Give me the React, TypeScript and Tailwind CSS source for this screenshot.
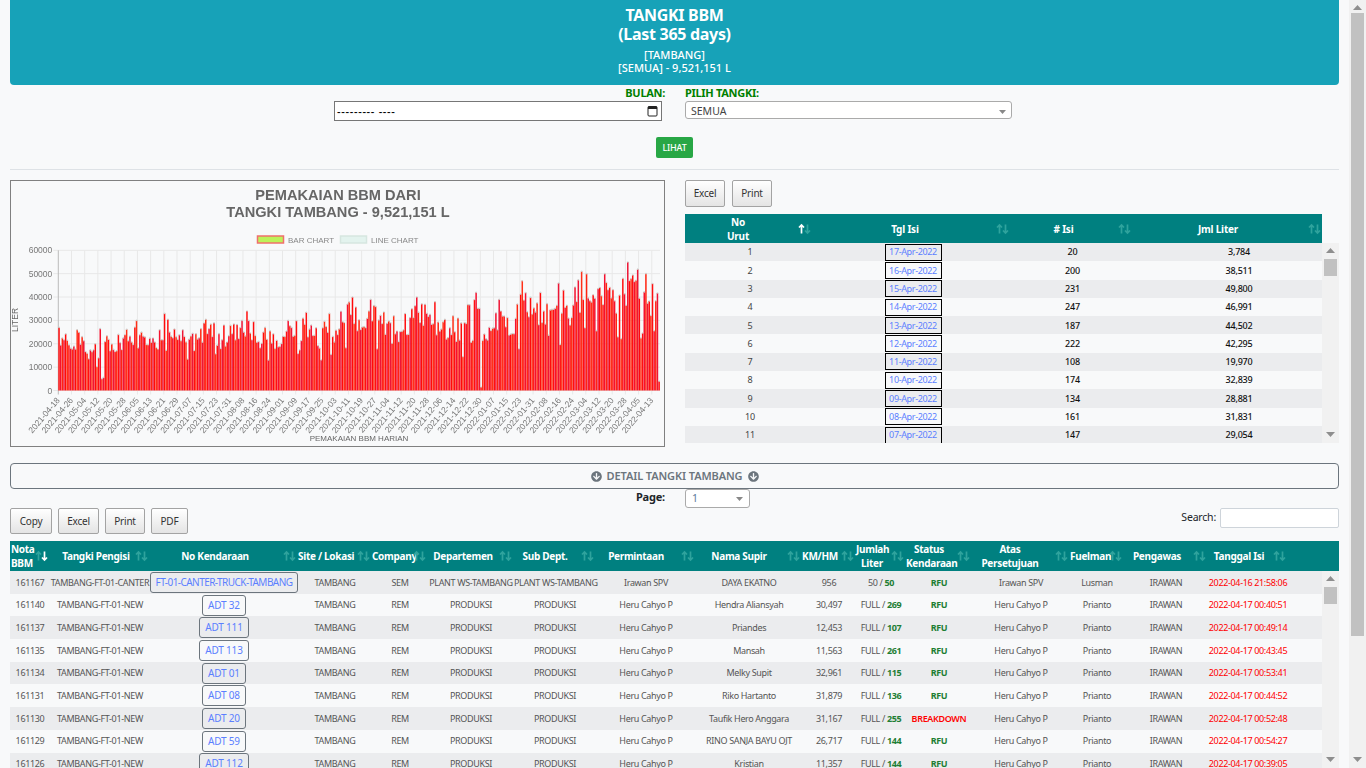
import { FaArrowCircleDown } from 'react-icons/fa'

const fontSans = 'font-["Noto_Sans","Liberation_Sans",sans-serif]'

const SortIcon = ({ up = false, down = false }: { up?: boolean; down?: boolean }) => (
    <svg width="13" height="11" viewBox="0 0 13 11" fill="none" strokeWidth="1.7">
        <path d="M3.5 10V1.5M1 4l2.5-2.5L6 4" stroke={up ? '#ffffff' : '#2fa39d'} />
        <path d="M9.5 1v8.5M7 7l2.5 2.5L12 7" stroke={down ? '#ffffff' : '#2fa39d'} />
    </svg>
)

const DtButton = ({ label, width, height }: { label: string; width: string; height: string }) => (
    <button
        className={`${width} ${height} rounded-[2px] border border-[#a3a3a3] bg-gradient-to-b from-white to-[#e4e4e4] text-[10px] tracking-[-0.2px] text-[#333]`}
    >
        {label}
    </button>
)

const Arrow = ({ dir }: { dir: 'up' | 'down' }) => (
    <svg width="9" height="5" viewBox="0 0 9 5" className="shrink-0 fill-[#8e8e8e]">
        <path d={dir === 'up' ? 'M4.5 0L9 5H0z' : 'M4.5 5L9 0H0z'} />
    </svg>
)

const ScrollTrack = ({ thumbTop, thumbHeight }: { thumbTop: string; thumbHeight: string }) => (
    <div className="flex h-full w-[17px] shrink-0 flex-col items-center bg-[#f1f1f1] pt-[5px]">
        <Arrow dir="up" />
        <div className={`${thumbTop} ${thumbHeight} w-[13px] shrink-0 bg-[#c1c1c1]`} />
        <div className="flex-1" />
        <div className="pb-[6px]">
            <Arrow dir="down" />
        </div>
    </div>
)

const Caret = () => (
    <svg width="7" height="4" viewBox="0 0 7 4" className="fill-[#888]">
        <path d="M0 0h7L3.5 4z" />
    </svg>
)

// daily usage chart, peaks per 8 day bucket read off the picture
const peaks = [
    27000, 26000, 20000, 26500, 24000, 30000, 25000, 26000, 33000, 26000, 26500, 30500, 28000, 30000, 34000, 27000,
    25500, 30000, 33500, 28000, 33000, 37000, 40000, 39000, 36000, 32000, 35000, 40000, 38000, 32000, 31000, 42000,
    30000, 39000, 37000, 47000, 42000, 46000, 43000, 51000, 50000, 50000, 48000, 55000, 50000, 50000,
]

const buildBars = () => {
    let seed = 71
    const next = () => {
        seed = (seed * 16807) % 2147483647
        return seed / 2147483647
    }
    const values: number[] = []
    for (let i = 0; i < 365; i++) {
        const bucket = Math.min(Math.floor(i / 8), peaks.length - 1)
        const r = next()
        const top = i % 8 === (bucket * 3) % 8
        values.push(top ? peaks[bucket] : peaks[bucket] * (r < 0.08 ? 0.45 + r : 0.6 + r * 0.36))
    }
    values[26] = 5000
    values[27] = 5600
    values[256] = 1500
    values[364] = 4000
    return values
}

const bars = buildBars()
const barColors = ['#ff0f0f', '#f5102e', '#ff2410', '#ee1535', '#ff0a0a', '#ff3018']

const dateLabels = Array.from({ length: 46 }, (_, i) => {
    const d = new Date(Date.UTC(2021, 3, 18 + i * 8))
    return d.toISOString().slice(0, 10)
})

const plotLeft = 47.3
const plotRight = 649
const plotTop = 69.3
const plotBottom = 209.5
const yOf = (v: number) => plotBottom - (v / 60000) * (plotBottom - plotTop)
const xOf = (i: number) => plotLeft + (i / 365) * (plotRight - plotLeft)

const UsageChart = () => (
    <div className="h-[267px] w-[655px] shrink-0 border border-[#808080]">
        <svg width="653" height="265" viewBox="0 0 653 265" className="blur-[0.4px]" fontFamily="Liberation Sans, sans-serif">
            <text x="327" y="19" textAnchor="middle" fontSize="14.6" fontWeight="700" fill="#666">
                PEMAKAIAN BBM DARI
            </text>
            <text x="327" y="36" textAnchor="middle" fontSize="14.6" fontWeight="700" fill="#666">
                TANGKI TAMBANG - 9,521,151 L
            </text>
            <rect x="246.5" y="55" width="26" height="7" fill="#bdf25a" stroke="#f0706c" strokeWidth="1.5" />
            <text x="277" y="62" fontSize="8" fill="#888">
                BAR CHART
            </text>
            <rect x="329.5" y="55" width="26" height="7" fill="#e3f3ee" stroke="#d6e6e0" strokeWidth="1.5" />
            <text x="360" y="62" fontSize="8" fill="#888">
                LINE CHART
            </text>
            {[0, 10000, 20000, 30000, 40000, 50000, 60000].map((v) => (
                <g key={v}>
                    <line x1={plotLeft - 5} x2={plotRight} y1={yOf(v)} y2={yOf(v)} stroke="#e8e8e8" />
                    <text x={plotLeft - 6} y={yOf(v) + 3} textAnchor="end" fontSize="8.5" fill="#777">
                        {v}
                    </text>
                </g>
            ))}
            {dateLabels.map((label, i) => {
                const x = xOf(i * 8)
                return (
                    <g key={label}>
                        <line x1={x} x2={x} y1={plotTop} y2={plotBottom + 4} stroke={i === 0 ? '#bbb' : '#e8e8e8'} />
                        <text
                            x={x + 2}
                            y={plotBottom + 10}
                            textAnchor="end"
                            fontSize="8.5"
                            fill="#777"
                            transform={`rotate(-50 ${x + 2} ${plotBottom + 10})`}
                        >
                            {label}
                        </text>
                    </g>
                )
            })}
            {bars.map((v, i) => (
                <rect
                    key={i}
                    x={xOf(i)}
                    y={yOf(v)}
                    width="1.5"
                    height={plotBottom - yOf(v)}
                    fill={barColors[i % barColors.length]}
                />
            ))}
            {bars.map((v, i) => (
                <circle key={i} cx={xOf(i) + 0.8} cy={yOf(v)} r="0.8" fill="#c9d2ce" />
            ))}
            <text x="7" y="139" textAnchor="middle" fontSize="8.5" fill="#666" transform="rotate(-90 7 139)">
                LITER
            </text>
            <text x="348" y="260" textAnchor="middle" fontSize="8" fill="#666">
                PEMAKAIAN BBM HARIAN
            </text>
        </svg>
    </div>
)

const dailyRows = [
    ['1', '17-Apr-2022', '20', '3,784'],
    ['2', '16-Apr-2022', '200', '38,511'],
    ['3', '15-Apr-2022', '231', '49,800'],
    ['4', '14-Apr-2022', '247', '46,991'],
    ['5', '13-Apr-2022', '187', '44,502'],
    ['6', '12-Apr-2022', '222', '42,295'],
    ['7', '11-Apr-2022', '108', '19,970'],
    ['8', '10-Apr-2022', '174', '32,839'],
    ['9', '09-Apr-2022', '134', '28,881'],
    ['10', '08-Apr-2022', '161', '31,831'],
    ['11', '07-Apr-2022', '147', '29,054'],
]

const DailyTable = () => (
    <div className="w-[654px]">
        <div className="grid h-[29px] w-[637px] grid-cols-[127px_198px_122px_190px] items-center bg-[#008080] text-[10px] font-bold leading-[14px] tracking-[-0.2px] text-white">
            {[
                { label: 'No', label2: 'Urut', pad: 'pr-[21px]', up: true },
                { label: 'Tgl Isi', pad: 'pr-[12px]' },
                { label: '# Isi', pad: 'pr-[15px]' },
                { label: 'Jml Liter', pad: 'pr-[18px]' },
            ].map((col) => (
                <div key={col.label} className={`relative text-center ${col.pad}`}>
                    {col.label}
                    {col.label2 && <div>{col.label2}</div>}
                    <span className="absolute top-1/2 right-[1px] -translate-y-1/2 leading-none">
                        <SortIcon up={col.up} />
                    </span>
                </div>
            ))}
        </div>
        <div className="flex h-[200px] overflow-hidden">
            <div className="w-[637px]">
                {dailyRows.map((row, i) => (
                    <div
                        key={row[0]}
                        className={`grid h-[18.3px] grid-cols-[130px_22px_152px_167px_166px] items-center text-center text-[9px] tracking-[-0.2px] ${i % 2 === 0 ? 'bg-[#ebecee]' : ''}`}
                    >
                        <span className="text-[#444]">{row[0]}</span>
                        <span />
                        <span className="mx-auto flex h-[17px] w-[57px] items-center justify-center whitespace-nowrap border-[1.5px] border-black tracking-[-0.35px] text-[#5b7fff]">
                            {row[1]}
                        </span>
                        <span className="font-medium text-[#111]">{row[2]}</span>
                        <span className="font-medium text-[#111]">{row[3]}</span>
                    </div>
                ))}
            </div>
            <ScrollTrack thumbTop="mt-[6px]" thumbHeight="h-[17px]" />
        </div>
    </div>
)

const detailColumns = [
    { label: 'Nota', label2: 'BBM', pad: '', align: 'text-left' },
    { label: 'Tangki Pengisi', pad: 'pr-2' },
    { label: 'No Kendaraan', pad: 'pr-[18px]' },
    { label: 'Site / Lokasi', pad: 'pr-5' },
    { label: 'Company', pad: 'pr-[18px]' },
    { label: 'Departemen', pad: 'pr-4' },
    { label: 'Sub Dept.', pad: 'pr-5' },
    { label: 'Permintaan', pad: 'pr-5' },
    { label: 'Nama Supir', pad: 'pr-5' },
    { label: 'KM/HM', pad: 'pr-[18px]' },
    { label: 'Jumlah', label2: 'Liter', pad: 'pr-[18px]' },
    { label: 'Status', label2: 'Kendaraan', pad: 'pr-5' },
    { label: 'Atas', label2: 'Persetujuan', pad: 'pr-[22px]' },
    { label: 'Fuelman', pad: 'pr-5' },
    { label: 'Pengawas', pad: 'pr-[18px]' },
    { label: 'Tanggal Isi', pad: 'pr-[18px]' },
]

const detailGrid =
    'grid grid-cols-[40px_100px_148px_74px_56px_86px_82px_100px_106px_54px_50px_66px_98px_54px_84px_80px_1fr] items-center'

const detailRows = [
    ['161167', 'TAMBANG-FT-01-CANTER', 'FT-01-CANTER-TRUCK-TAMBANG', 'SEM', 'PLANT WS-TAMBANG', 'PLANT WS-TAMBANG', 'Irawan SPV', 'DAYA EKATNO', '956', '50', '50', 'RFU', 'Irawan SPV', 'Lusman', '2022-04-16 21:58:06'],
    ['161140', 'TAMBANG-FT-01-NEW', 'ADT 32', 'REM', 'PRODUKSI', 'PRODUKSI', 'Heru Cahyo P', 'Hendra Aliansyah', '30,497', 'FULL', '269', 'RFU', 'Heru Cahyo P', 'Prianto', '2022-04-17 00:40:51'],
    ['161137', 'TAMBANG-FT-01-NEW', 'ADT 111', 'REM', 'PRODUKSI', 'PRODUKSI', 'Heru Cahyo P', 'Priandes', '12,453', 'FULL', '107', 'RFU', 'Heru Cahyo P', 'Prianto', '2022-04-17 00:49:14'],
    ['161135', 'TAMBANG-FT-01-NEW', 'ADT 113', 'REM', 'PRODUKSI', 'PRODUKSI', 'Heru Cahyo P', 'Mansah', '11,563', 'FULL', '261', 'RFU', 'Heru Cahyo P', 'Prianto', '2022-04-17 00:43:45'],
    ['161134', 'TAMBANG-FT-01-NEW', 'ADT 01', 'REM', 'PRODUKSI', 'PRODUKSI', 'Heru Cahyo P', 'Melky Supit', '32,961', 'FULL', '115', 'RFU', 'Heru Cahyo P', 'Prianto', '2022-04-17 00:53:41'],
    ['161131', 'TAMBANG-FT-01-NEW', 'ADT 08', 'REM', 'PRODUKSI', 'PRODUKSI', 'Heru Cahyo P', 'Riko Hartanto', '31,879', 'FULL', '136', 'RFU', 'Heru Cahyo P', 'Prianto', '2022-04-17 00:44:52'],
    ['161130', 'TAMBANG-FT-01-NEW', 'ADT 20', 'REM', 'PRODUKSI', 'PRODUKSI', 'Heru Cahyo P', 'Taufik Hero Anggara', '31,167', 'FULL', '255', 'BREAKDOWN', 'Heru Cahyo P', 'Prianto', '2022-04-17 00:52:48'],
    ['161129', 'TAMBANG-FT-01-NEW', 'ADT 59', 'REM', 'PRODUKSI', 'PRODUKSI', 'Heru Cahyo P', 'RINO SANJA BAYU OJT', '26,717', 'FULL', '144', 'RFU', 'Heru Cahyo P', 'Prianto', '2022-04-17 00:54:27'],
    ['161126', 'TAMBANG-FT-01-NEW', 'ADT 112', 'REM', 'PRODUKSI', 'PRODUKSI', 'Heru Cahyo P', 'Kristian', '11,357', 'FULL', '144', 'RFU', 'Heru Cahyo P', 'Prianto', '2022-04-17 00:39:05'],
]

const DetailTable = () => (
    <div>
        <div className={`${detailGrid} h-[30px] bg-[#008080] text-[10px] font-bold leading-[14px] tracking-[-0.3px] text-white`}>
            {detailColumns.map((col, i) => (
                <div key={col.label} className={`relative whitespace-nowrap ${col.align ?? 'text-center'} ${col.pad}`}>
                    <span className={i === 0 ? 'pl-[1px]' : ''}>{col.label}</span>
                    {col.label2 && <div className={i === 0 ? 'pl-[1px]' : ''}>{col.label2}</div>}
                    <span className="absolute top-1/2 right-[2px] -translate-y-1/2 leading-none">
                        <SortIcon down={i === 0} />
                    </span>
                </div>
            ))}
            <div />
        </div>
        <div className="flex h-[197px] overflow-hidden">
            <div className="flex-1">
                {detailRows.map((row, i) => (
                    <div
                        key={row[0]}
                        className={`${detailGrid} h-[22.7px] text-center text-[9px] tracking-[-0.35px] text-[#555] ${i % 2 === 0 ? 'bg-[#ebecee]' : ''}`}
                    >
                        <span className="whitespace-nowrap">{row[0]}</span>
                        <span className="whitespace-nowrap">{row[1]}</span>
                        <span className="flex justify-center">
                            <span
                                className={`flex h-[21px] items-center whitespace-nowrap rounded-[3px] border-[1.5px] border-[#6c757d] px-[5px] text-[10px] text-[#5b7fff] ${i === 0 ? 'tracking-[-0.55px]' : 'tracking-[-0.2px]'}`}
                            >
                                {row[2]}
                            </span>
                        </span>
                        <span>TAMBANG</span>
                        <span>{row[3]}</span>
                        <span className="whitespace-nowrap">{row[4]}</span>
                        <span className="whitespace-nowrap">{row[5]}</span>
                        <span>{row[6]}</span>
                        <span className="whitespace-nowrap">{row[7]}</span>
                        <span>{row[8]}</span>
                        <span className="whitespace-nowrap">
                            {row[9]} / <b className="text-[#1e7e34]">{row[10]}</b>
                        </span>
                        <b className={row[11] === 'RFU' ? 'text-[#1e7e34]' : 'font-semibold text-[#ff0000]'}>{row[11]}</b>
                        <span>{row[12]}</span>
                        <span>{row[13]}</span>
                        <span>IRAWAN</span>
                        <span className="whitespace-nowrap text-[#ff0000]">{row[14]}</span>
                        <span />
                    </div>
                ))}
            </div>
            <ScrollTrack thumbTop="mt-[6px]" thumbHeight="h-[17px]" />
        </div>
    </div>
)

const App = () => {
    return (
        <div className={`flex h-screen overflow-hidden bg-[#f8f9fa] ${fontSans}`}>
            <div className="w-[1349px] shrink-0 px-[10px]">
                <div className="h-[85px] rounded-b-[4px] bg-[#17a2b8] pt-[6px] text-center font-bold text-white">
                    <div className="text-[16px] leading-[19px] tracking-[-0.3px]">TANGKI BBM</div>
                    <div className="text-[16px] leading-[19px] tracking-[-0.3px]">(Last 365 days)</div>
                    <div className="mt-[4px] text-[11px] font-medium leading-[13px]">[TAMBANG]</div>
                    <div className="text-[11px] font-medium leading-[14px]">[SEMUA] - 9,521,151 L</div>
                </div>

                <div className="mt-[1px] flex">
                    <div className="ml-[324px] w-[331px]">
                        <div className="h-[15px] text-right text-[11px] font-bold leading-[13px] tracking-[-0.3px] text-[#008000]">BULAN:</div>
                        <div className="flex h-[20px] w-[328px] items-center justify-between border border-[#767676] bg-white px-[2px] text-[11px] font-medium leading-none tracking-[0.7px] text-black">
                            --------- ----
                            <svg width="11" height="12" viewBox="0 0 11 12" className="mr-[1px]">
                                <rect x="1" y="1.5" width="9" height="9.5" rx="1" fill="none" stroke="#222" />
                                <rect x="1" y="1.5" width="9" height="2.5" fill="#222" />
                            </svg>
                        </div>
                    </div>
                    <div className="ml-[20px] w-[327px]">
                        <div className="h-[15px] text-[11px] font-bold leading-[13px] tracking-[-0.3px] text-[#008000]">PILIH TANGKI:</div>
                        <div className="flex h-[18px] items-center justify-between rounded-[3px] border border-[#aaaaaa] bg-white px-[5px] pt-[3px] text-[10.5px] text-[#444]">
                            SEMUA
                            <Caret />
                        </div>
                    </div>
                </div>
                <div className="mt-[16px] flex justify-center">
                    <button className="h-[21px] w-[37px] rounded-[2px] bg-[#28a745] text-[9px] font-medium tracking-[-0.2px] text-white">
                        LIHAT
                    </button>
                </div>
                <div className="mt-[11px] h-[1px] bg-[#dee2e6]" />

                <div className="mt-[10px] flex gap-[20px]">
                    <UsageChart />
                    <div>
                        <div className="flex gap-[7px]">
                            <DtButton label="Excel" width="w-[40px]" height="h-[27px]" />
                            <DtButton label="Print" width="w-[40px]" height="h-[27px]" />
                        </div>
                        <div className="mt-[7px]">
                            <DailyTable />
                        </div>
                    </div>
                </div>

                <div className="mt-[16px] flex h-[26px] items-center justify-center gap-[5px] rounded-[4px] border border-[#6c757d] text-[11px] font-semibold tracking-[-0.1px] text-[#6c757d]">
                    <FaArrowCircleDown className="text-[11px]" />
                    DETAIL TANGKI TAMBANG
                    <FaArrowCircleDown className="text-[11px]" />
                </div>

                <div className="flex">
                    <div className="h-[19px] w-[655px] text-right text-[11px] font-bold leading-[16px] tracking-[-0.2px] text-[#212529]">Page:</div>
                    <div className="ml-[20px] flex h-[19px] w-[65px] items-center justify-between rounded-[3px] border border-[#aaaaaa] bg-white px-[6px] text-[10.5px] text-[#5a7a9a]">
                        1
                        <Caret />
                    </div>
                </div>

                <div className="flex items-start justify-between">
                    <div className="flex gap-[6px]">
                        <DtButton label="Copy" width="w-[42px]" height="h-[26px]" />
                        <DtButton label="Excel" width="w-[41px]" height="h-[26px]" />
                        <DtButton label="Print" width="w-[40px]" height="h-[26px]" />
                        <DtButton label="PDF" width="w-[37px]" height="h-[26px]" />
                    </div>
                    <div className="flex items-center gap-[4px] text-[10.5px] tracking-[-0.2px] text-[#212529]">
                        Search:
                        <div className="h-[20px] w-[119px] rounded-[2px] border border-[#ced4da] bg-white" />
                    </div>
                </div>

                <div className="mt-[7px]">
                    <DetailTable />
                </div>
            </div>
            <div className="ml-auto h-full">
                <ScrollTrack thumbTop="mt-[3px]" thumbHeight="h-[623px]" />
            </div>
        </div>
    )
}

export default App
